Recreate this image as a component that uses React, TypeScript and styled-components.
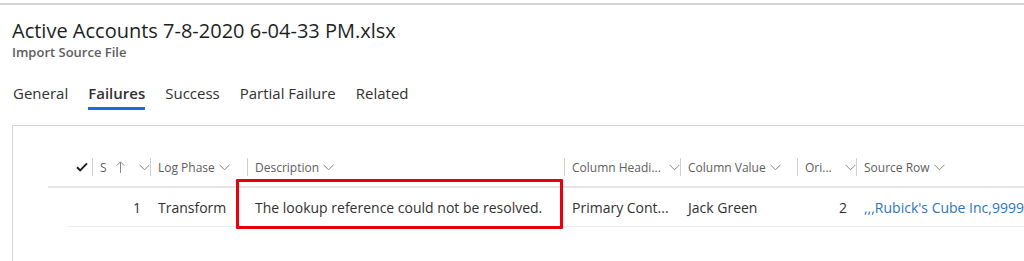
import styled, { createGlobalStyle } from 'styled-components';

const GlobalStyle = createGlobalStyle`
  html, body {
    margin: 0;
    padding: 0;
    background: #fff;
    overflow: hidden;
  }
  body {
    font-family: "Open Sans", "Noto Sans", sans-serif;
    color: #323130;
  }
`;

const Page = styled.div`
  width: 1024px;
  height: 261px;
  overflow: hidden;
  padding-top: 3px;
  box-sizing: border-box;
`;

const TopRule = styled.div`
  height: 2px;
  background: #d3d3d3;
`;

const Header = styled.header`
  padding: 13px 12px 0;
`;

const Title = styled.h1`
  margin: 0;
  font-size: 20px;
  font-weight: 400;
  line-height: 26px;
  color: #201f1e;
`;

const Subtitle = styled.div`
  font-size: 13px;
  font-weight: 600;
  line-height: 16px;
  color: #605e5c;
`;

const Tabs = styled.nav`
  display: flex;
  gap: 20px;
  margin-top: 23px;
  padding-left: 1px;
`;

const Tab = styled.div<{ $active?: boolean }>`
  font-size: 15px;
  line-height: 20px;
  font-weight: ${({ $active }) => ($active ? 600 : 400)};
  color: #323130;
  padding-bottom: 4px;
  border-bottom: 3px solid ${({ $active }) => ($active ? '#1a6ce0' : 'transparent')};
`;

const Panel = styled.section`
  margin: 15px 0 0 12px;
  border-top: 1px solid #d6d6d6;
  border-left: 1px solid #d6d6d6;
  height: 140px;
  padding: 22px 0 0 35px;
  position: relative;
`;

const cols = '58px 97px 317px 116px 117px 59px 1fr';

const HeaderRow = styled.div`
  display: grid;
  grid-template-columns: 44px ${cols};
  align-items: center;
  height: 38px;
  border-bottom: 2px solid #e6e6e6;
  white-space: nowrap;
`;

const DataRow = styled.div`
  display: grid;
  grid-template-columns: 24px ${cols};
  align-items: center;
  height: 38px;
  margin-left: 20px;
  border-bottom: 1px solid #ededed;
  white-space: nowrap;
  overflow: hidden;
`;

const CheckCell = styled.div`
  display: flex;
  justify-content: flex-end;
  padding-right: 4px;
`;

const HeadCell = styled.div`
  display: flex;
  align-items: center;
  gap: 4px;
  height: 18px;
  padding-left: 7px;
  border-left: 1px solid #d0d0d0;
  font-size: 12px;
  color: #605e5c;
  overflow: hidden;
`;

const SortArrow = styled.span`
  display: flex;
  margin-left: 5px;
`;

const Spacer = styled.span`
  flex: 1;
`;

const Cell = styled.div<{ $align?: 'left' | 'right'; $link?: boolean }>`
  font-size: 14px;
  color: ${({ $link }) => ($link ? '#2f74b8' : '#323130')};
  text-align: ${({ $align }) => $align ?? 'left'};
  padding: ${({ $align }) => ($align === 'right' ? '0 9px 0 0' : '0 0 0 8px')};
  overflow: hidden;
`;

const Highlight = styled.div`
  position: absolute;
  left: 223px;
  top: 53px;
  width: 321px;
  height: 44px;
  border: 3px solid #e8000b;
  border-radius: 1px;
  pointer-events: none;
`;

const Chevron = () => (
  <svg width="11" height="7" viewBox="0 0 11 7" fill="none">
    <polyline points="0.5,0.8 5.5,5.8 10.5,0.8" stroke="#8a8886" strokeWidth="1" />
  </svg>
);

const UpArrow = () => (
  <svg width="9" height="12" viewBox="0 0 9 12" fill="none">
    <line x1="4.5" y1="1" x2="4.5" y2="12" stroke="#8a8886" strokeWidth="1" />
    <polyline points="0.8,4.6 4.5,0.9 8.2,4.6" stroke="#8a8886" strokeWidth="1" />
  </svg>
);

const Check = () => (
  <svg width="12" height="10" viewBox="0 0 12 10" fill="none">
    <polyline points="1,5.2 4.2,8.4 11,1.4" stroke="#201f1e" strokeWidth="2" />
  </svg>
);

export default function App() {
  return (
    <Page>
      <GlobalStyle />
      <TopRule />
      <Header>
        <Title>Active Accounts 7-8-2020 6-04-33 PM.xlsx</Title>
        <Subtitle>Import Source File</Subtitle>
        <Tabs>
          <Tab>General</Tab>
          <Tab $active>Failures</Tab>
          <Tab>Success</Tab>
          <Tab>Partial Failure</Tab>
          <Tab>Related</Tab>
        </Tabs>
      </Header>
      <Panel>
        <HeaderRow>
          <CheckCell>
            <Check />
          </CheckCell>
          <HeadCell>
            S
            <SortArrow>
              <UpArrow />
            </SortArrow>
            <Spacer />
            <Chevron />
          </HeadCell>
          <HeadCell>
            Log Phase <Chevron />
          </HeadCell>
          <HeadCell>
            Description <Chevron />
          </HeadCell>
          <HeadCell>
            Column Headi... <Spacer />
            <Chevron />
          </HeadCell>
          <HeadCell>
            Column Value <Chevron />
          </HeadCell>
          <HeadCell>
            Ori... <Spacer />
            <Chevron />
          </HeadCell>
          <HeadCell>
            Source Row <Chevron />
          </HeadCell>
        </HeaderRow>
        <DataRow>
          <span />
          <Cell $align="right">1</Cell>
          <Cell>Transform</Cell>
          <Cell>The lookup reference could not be resolved.</Cell>
          <Cell>Primary Cont...</Cell>
          <Cell>Jack Green</Cell>
          <Cell $align="right">2</Cell>
          <Cell $link>,,,Rubick's Cube Inc,999999</Cell>
        </DataRow>
        <Highlight />
      </Panel>
    </Page>
  );
}
